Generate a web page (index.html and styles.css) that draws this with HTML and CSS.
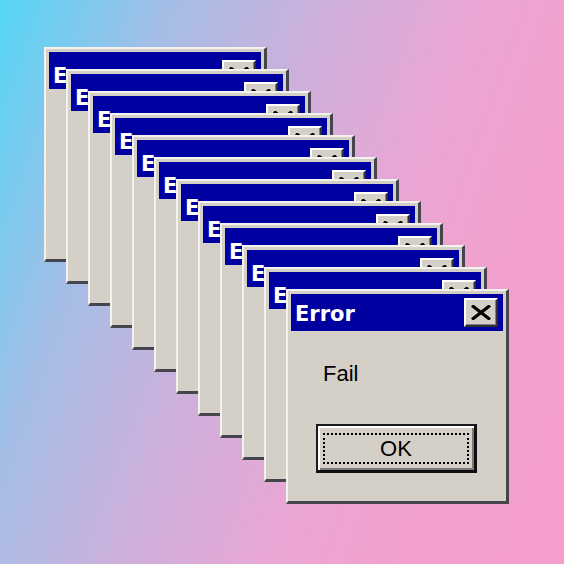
FILE: index.html
```html
<!DOCTYPE html>
<html>
<head>
<meta charset="utf-8">
<title>Error</title>
<link rel="stylesheet" href="styles.css">
</head>
<body>
<div class="desktop">
  <div class="window"><div class="titlebar"><span class="title">Error</span><div class="close"><svg viewBox="0 0 20 15" width="20" height="15"><path d="M1 0.5 L19 14.5 M19 0.5 L1 14.5" /></svg></div></div><div class="body"><p class="msg">Fail</p><div class="ok"><span class="focus">OK</span></div></div></div>
  <div class="window"><div class="titlebar"><span class="title">Error</span><div class="close"><svg viewBox="0 0 20 15" width="20" height="15"><path d="M1 0.5 L19 14.5 M19 0.5 L1 14.5" /></svg></div></div><div class="body"><p class="msg">Fail</p><div class="ok"><span class="focus">OK</span></div></div></div>
  <div class="window"><div class="titlebar"><span class="title">Error</span><div class="close"><svg viewBox="0 0 20 15" width="20" height="15"><path d="M1 0.5 L19 14.5 M19 0.5 L1 14.5" /></svg></div></div><div class="body"><p class="msg">Fail</p><div class="ok"><span class="focus">OK</span></div></div></div>
  <div class="window"><div class="titlebar"><span class="title">Error</span><div class="close"><svg viewBox="0 0 20 15" width="20" height="15"><path d="M1 0.5 L19 14.5 M19 0.5 L1 14.5" /></svg></div></div><div class="body"><p class="msg">Fail</p><div class="ok"><span class="focus">OK</span></div></div></div>
  <div class="window"><div class="titlebar"><span class="title">Error</span><div class="close"><svg viewBox="0 0 20 15" width="20" height="15"><path d="M1 0.5 L19 14.5 M19 0.5 L1 14.5" /></svg></div></div><div class="body"><p class="msg">Fail</p><div class="ok"><span class="focus">OK</span></div></div></div>
  <div class="window"><div class="titlebar"><span class="title">Error</span><div class="close"><svg viewBox="0 0 20 15" width="20" height="15"><path d="M1 0.5 L19 14.5 M19 0.5 L1 14.5" /></svg></div></div><div class="body"><p class="msg">Fail</p><div class="ok"><span class="focus">OK</span></div></div></div>
  <div class="window"><div class="titlebar"><span class="title">Error</span><div class="close"><svg viewBox="0 0 20 15" width="20" height="15"><path d="M1 0.5 L19 14.5 M19 0.5 L1 14.5" /></svg></div></div><div class="body"><p class="msg">Fail</p><div class="ok"><span class="focus">OK</span></div></div></div>
  <div class="window"><div class="titlebar"><span class="title">Error</span><div class="close"><svg viewBox="0 0 20 15" width="20" height="15"><path d="M1 0.5 L19 14.5 M19 0.5 L1 14.5" /></svg></div></div><div class="body"><p class="msg">Fail</p><div class="ok"><span class="focus">OK</span></div></div></div>
  <div class="window"><div class="titlebar"><span class="title">Error</span><div class="close"><svg viewBox="0 0 20 15" width="20" height="15"><path d="M1 0.5 L19 14.5 M19 0.5 L1 14.5" /></svg></div></div><div class="body"><p class="msg">Fail</p><div class="ok"><span class="focus">OK</span></div></div></div>
  <div class="window"><div class="titlebar"><span class="title">Error</span><div class="close"><svg viewBox="0 0 20 15" width="20" height="15"><path d="M1 0.5 L19 14.5 M19 0.5 L1 14.5" /></svg></div></div><div class="body"><p class="msg">Fail</p><div class="ok"><span class="focus">OK</span></div></div></div>
  <div class="window"><div class="titlebar"><span class="title">Error</span><div class="close"><svg viewBox="0 0 20 15" width="20" height="15"><path d="M1 0.5 L19 14.5 M19 0.5 L1 14.5" /></svg></div></div><div class="body"><p class="msg">Fail</p><div class="ok"><span class="focus">OK</span></div></div></div>
  <div class="window"><div class="titlebar"><span class="title">Error</span><div class="close"><svg viewBox="0 0 20 15" width="20" height="15"><path d="M1 0.5 L19 14.5 M19 0.5 L1 14.5" /></svg></div></div><div class="body"><p class="msg">Fail</p><div class="ok"><span class="focus">OK</span></div></div></div>
</div>
</body>
</html>
```
FILE: styles.css
```css
html, body {
  margin: 0;
  padding: 0;
}

body {
  width: 564px;
  height: 564px;
  overflow: hidden;
  font-family: "Liberation Sans", Arial, sans-serif;
}

.desktop {
  position: relative;
  width: 564px;
  height: 564px;
  background: linear-gradient(110deg, #55d6f6 0%, #a4bee6 22%, #cdb0dc 42%, #eaa6d4 62%, #f4a0cc 80%, #f69ecb 100%);
}

.window {
  position: absolute;
  box-sizing: border-box;
  width: 223px;
  height: 215px;
  display: flex;
  flex-direction: column;
  background: #d4d0c8;
  border-style: solid;
  border-width: 2px 3px 3px 2px;
  border-color: #f4f2ee #45454d #45454d #f4f2ee;
  padding: 3px 3px 3px 3px;
}

.window:nth-child(1)  { left: 44px;  top: 47px; }
.window:nth-child(2)  { left: 66px;  top: 69px; }
.window:nth-child(3)  { left: 88px;  top: 91px; }
.window:nth-child(4)  { left: 110px; top: 113px; }
.window:nth-child(5)  { left: 132px; top: 135px; }
.window:nth-child(6)  { left: 154px; top: 157px; }
.window:nth-child(7)  { left: 176px; top: 179px; }
.window:nth-child(8)  { left: 198px; top: 201px; }
.window:nth-child(9)  { left: 220px; top: 223px; }
.window:nth-child(10) { left: 242px; top: 245px; }
.window:nth-child(11) { left: 264px; top: 267px; }
.window:nth-child(12) { left: 286px; top: 289px; }

.titlebar {
  height: 37px;
  flex: none;
  box-sizing: border-box;
  background: #0000a0;
  display: flex;
  align-items: flex-start;
  justify-content: space-between;
  padding: 0 5px 0 4px;
  overflow: hidden;
}

.title {
  color: #ffffff;
  font-family: "DejaVu Sans", Verdana, sans-serif;
  font-weight: bold;
  font-size: 21px;
  line-height: 24px;
  margin-top: 8px;
}

.close {
  box-sizing: border-box;
  width: 34px;
  height: 29px;
  margin-top: 4px;
  background: #d4d0c8;
  border-style: solid;
  border-width: 2px 2px 2px 2px;
  border-color: #ffffff #303030 #303030 #ffffff;
  box-shadow: inset -1px -1px #808080;
  display: flex;
  align-items: center;
  justify-content: center;
}

.window:not(:last-child) .title {
  margin-top: 12px;
}

.window:not(:last-child) .close {
  margin-top: 8px;
}

.close svg {
  display: block;
}

.close path {
  stroke: #000000;
  stroke-width: 3.2;
  fill: none;
}

.body {
  flex: 1;
  display: flex;
  flex-direction: column;
  align-items: flex-start;
}

.msg {
  margin: 30px 0 0 32px;
  font-size: 22px;
  line-height: 26px;
  color: #000000;
}

.ok {
  box-sizing: border-box;
  margin: 37px 0 0 25px;
  width: 161px;
  height: 49px;
  border-style: solid;
  border-width: 2px 3px 3px 2px;
  border-color: #1a1a1a #101010 #101010 #1a1a1a;
  box-shadow: inset 2px 2px #ffffff, inset -2px -2px #7a7a7a;
  background: #d4d0c8;
  padding: 7px 5px 6px 5px;
  display: flex;
}

.focus {
  flex: 1;
  border: 2px dotted #000000;
  display: flex;
  align-items: center;
  justify-content: center;
  font-size: 22px;
  line-height: 26px;
  color: #000000;
}
```
